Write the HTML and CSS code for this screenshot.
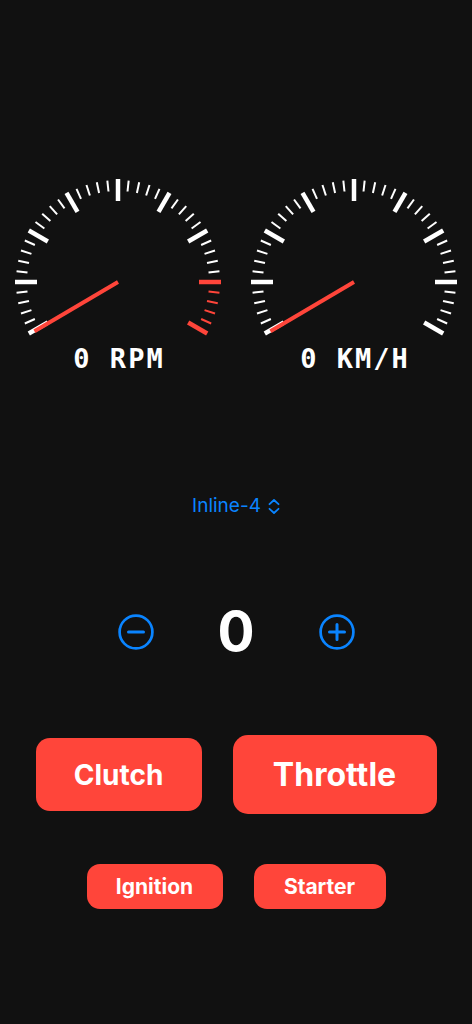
FILE: index.html
```html
<!DOCTYPE html>
<html lang="en">
<head>
<meta charset="utf-8">
<title>Engine</title>
<link rel="stylesheet" href="styles.css">
</head>
<body>
<main class="screen">
  <section class="gauges">
    <div class="gauge">
      <svg class="dial" viewBox="0 0 236 172" width="236" height="172">
        <g transform="translate(118 112)">
          <g id="dialBase">
            <line class="mj" x1="-103" x2="-81" transform="rotate(-30)"/>
            <line class="mn" x1="-102" x2="-91" transform="rotate(-24)"/>
            <line class="mn" x1="-102" x2="-91" transform="rotate(-18)"/>
            <line class="mn" x1="-102" x2="-91" transform="rotate(-12)"/>
            <line class="mn" x1="-102" x2="-91" transform="rotate(-6)"/>
            <line class="mj" x1="-103" x2="-81" transform="rotate(0)"/>
            <line class="mn" x1="-102" x2="-91" transform="rotate(6)"/>
            <line class="mn" x1="-102" x2="-91" transform="rotate(12)"/>
            <line class="mn" x1="-102" x2="-91" transform="rotate(18)"/>
            <line class="mn" x1="-102" x2="-91" transform="rotate(24)"/>
            <line class="mj" x1="-103" x2="-81" transform="rotate(30)"/>
            <line class="mn" x1="-102" x2="-91" transform="rotate(36)"/>
            <line class="mn" x1="-102" x2="-91" transform="rotate(42)"/>
            <line class="mn" x1="-102" x2="-91" transform="rotate(48)"/>
            <line class="mn" x1="-102" x2="-91" transform="rotate(54)"/>
            <line class="mj" x1="-103" x2="-81" transform="rotate(60)"/>
            <line class="mn" x1="-102" x2="-91" transform="rotate(66)"/>
            <line class="mn" x1="-102" x2="-91" transform="rotate(72)"/>
            <line class="mn" x1="-102" x2="-91" transform="rotate(78)"/>
            <line class="mn" x1="-102" x2="-91" transform="rotate(84)"/>
            <line class="mj" x1="-103" x2="-81" transform="rotate(90)"/>
            <line class="mn" x1="-102" x2="-91" transform="rotate(96)"/>
            <line class="mn" x1="-102" x2="-91" transform="rotate(102)"/>
            <line class="mn" x1="-102" x2="-91" transform="rotate(108)"/>
            <line class="mn" x1="-102" x2="-91" transform="rotate(114)"/>
            <line class="mj" x1="-103" x2="-81" transform="rotate(120)"/>
            <line class="mn" x1="-102" x2="-91" transform="rotate(126)"/>
            <line class="mn" x1="-102" x2="-91" transform="rotate(132)"/>
            <line class="mn" x1="-102" x2="-91" transform="rotate(138)"/>
            <line class="mn" x1="-102" x2="-91" transform="rotate(144)"/>
            <line class="mj" x1="-103" x2="-81" transform="rotate(150)"/>
            <line class="mn" x1="-102" x2="-91" transform="rotate(156)"/>
            <line class="mn" x1="-102" x2="-91" transform="rotate(162)"/>
            <line class="mn" x1="-102" x2="-91" transform="rotate(168)"/>
            <line class="mn" x1="-102" x2="-91" transform="rotate(174)"/>
          </g>
          <g class="red">
            <line class="mj" x1="-103" x2="-81" transform="rotate(180)"/>
            <line class="mn" x1="-102" x2="-91" transform="rotate(186)"/>
            <line class="mn" x1="-102" x2="-91" transform="rotate(192)"/>
            <line class="mn" x1="-102" x2="-91" transform="rotate(198)"/>
            <line class="mn" x1="-102" x2="-91" transform="rotate(204)"/>
            <line class="mj" x1="-103" x2="-81" transform="rotate(210)"/>
          </g>
          <line class="needle" x1="0" y1="0" x2="-97" y2="0" transform="rotate(-30.5)"/>
        </g>
      </svg>
      <div class="readout">0 RPM</div>
    </div>
    <div class="gauge">
      <svg class="dial" viewBox="0 0 236 172" width="236" height="172">
        <g transform="translate(118 112)">
          <use href="#dialBase"/>
          <line class="mj" x1="-103" x2="-81" transform="rotate(180)"/>
          <line class="mn" x1="-102" x2="-91" transform="rotate(186)"/>
          <line class="mn" x1="-102" x2="-91" transform="rotate(192)"/>
          <line class="mn" x1="-102" x2="-91" transform="rotate(198)"/>
          <line class="mn" x1="-102" x2="-91" transform="rotate(204)"/>
          <line class="mj" x1="-103" x2="-81" transform="rotate(210)"/>
          <line class="needle" x1="0" y1="0" x2="-97" y2="0" transform="rotate(-30.5)"/>
        </g>
      </svg>
      <div class="readout">0 KM/H</div>
    </div>
  </section>

  <div class="picker">
    <span class="picker-label">Inline-4</span>
    <svg class="updown" viewBox="0 0 12 15" width="12" height="15">
      <path d="M1.5 5.2 L6 1 L10.5 5.2 M1.5 9.8 L6 14 L10.5 9.8"/>
    </svg>
  </div>

  <div class="stepper">
    <svg class="step-btn" viewBox="0 0 36 36" width="36" height="36">
      <circle cx="18" cy="18" r="16.4"/>
      <path d="M10.5 18 H25.5"/>
    </svg>
    <div class="gear">0</div>
    <svg class="step-btn" viewBox="0 0 36 36" width="36" height="36">
      <circle cx="18" cy="18" r="16.4"/>
      <path d="M10.5 18 H25.5 M18 10.5 V25.5"/>
    </svg>
  </div>

  <div class="row row-main">
    <button class="btn btn-clutch">Clutch</button>
    <button class="btn btn-throttle">Throttle</button>
  </div>

  <div class="row row-small">
    <button class="btn btn-small btn-ignition">Ignition</button>
    <button class="btn btn-small btn-starter">Starter</button>
  </div>
</main>
</body>
</html>
```

FILE: styles.css
```css
html, body {
  margin: 0;
  padding: 0;
  background: #111111;
}

.screen {
  width: 472px;
  height: 1024px;
  display: flex;
  flex-direction: column;
  align-items: center;
  font-family: "Inter", "Liberation Sans", sans-serif;
  color: #ffffff;
}

.gauges {
  padding-top: 170px;
  display: flex;
  width: 472px;
}

.gauge {
  width: 236px;
  display: flex;
  flex-direction: column;
  align-items: center;
}

.dial {
  display: block;
}

.dial line {
  stroke: #ffffff;
}

.dial .mj {
  stroke-width: 4.5;
}

.dial .mn {
  stroke-width: 2;
}

.dial .red line {
  stroke: #ff453a;
}

.dial .needle {
  stroke: #ff453a;
  stroke-width: 4;
}

.readout {
  font-family: "DejaVu Sans Mono", "Liberation Mono", monospace;
  font-weight: bold;
  font-size: 27px;
  line-height: 32px;
  letter-spacing: 2px;
  text-indent: 2px;
  white-space: pre;
  color: #ffffff;
  margin-top: 1px;
}

.picker {
  margin-top: 119px;
  display: flex;
  align-items: center;
  gap: 7px;
  height: 24px;
  color: #0a84ff;
}

.picker-label {
  font-size: 19px;
  line-height: 24px;
}

.updown {
  display: block;
}

.updown path {
  fill: none;
  stroke: #0a84ff;
  stroke-width: 1.8;
  stroke-linecap: round;
  stroke-linejoin: round;
}

.stepper {
  margin-top: 86px;
  display: grid;
  grid-template-columns: 36px 165px 36px;
  align-items: center;
  justify-items: center;
}

.step-btn {
  display: block;
}

.step-btn circle {
  fill: none;
  stroke: #0a84ff;
  stroke-width: 2.7;
}

.step-btn path {
  fill: none;
  stroke: #0a84ff;
  stroke-width: 3;
  stroke-linecap: round;
}

.gear {
  font-weight: 700;
  font-size: 55px;
  line-height: 55px;
  color: #ffffff;
}

.row {
  display: flex;
  align-items: center;
  justify-content: center;
  gap: 31px;
}

.row-main {
  margin-top: 76px;
  height: 79px;
}

.row-small {
  margin-top: 50px;
  height: 45px;
}

.btn {
  border: none;
  margin: 0;
  padding: 0;
  background: #ff453a;
  color: #ffffff;
  font-family: "Inter", "Liberation Sans", sans-serif;
  font-weight: 700;
  display: flex;
  align-items: center;
  justify-content: center;
}

.btn-clutch {
  width: 166px;
  height: 73px;
  border-radius: 14px;
  font-size: 28px;
}

.btn-throttle {
  width: 204px;
  height: 79px;
  border-radius: 15px;
  font-size: 32px;
}

.btn-small {
  height: 45px;
  border-radius: 13px;
  font-size: 21px;
}

.btn-ignition {
  width: 136px;
}

.btn-starter {
  width: 132px;
}
```
